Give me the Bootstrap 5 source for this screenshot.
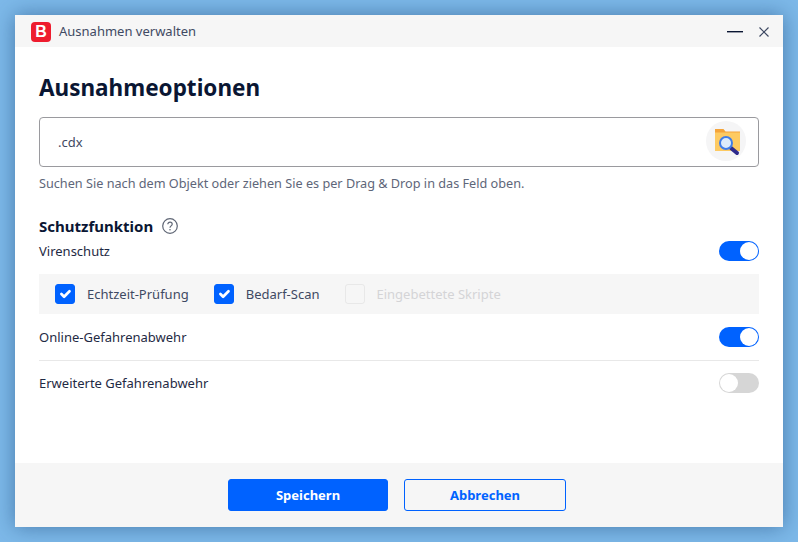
<!DOCTYPE html>
<html lang="de">
<head>
<meta charset="utf-8">
<title>Ausnahmen verwalten</title>
<link href="https://cdn.jsdelivr.net/npm/bootstrap@5.3.0/dist/css/bootstrap.min.css" rel="stylesheet">
<style>
html,body{height:100%;}
body{background:#7db9e9;padding:15px;font-family:"Noto Sans","Open Sans",sans-serif;font-size:13px;color:#0a1633;overflow:hidden;}
.win{height:512px;width:768px;background:#fff;box-shadow:0 0 20px rgba(20,60,110,.5);}
.tbar{height:32px;background:#f6f6f6;padding:1px 14px 0 16px;color:#3f4a63;}
.logo{width:20px;height:20px;background:#ee1c2e;border-radius:4px;color:#fff;font:700 16px/20px "Liberation Sans",sans-serif;text-align:center;margin-right:8px;}
.tbtn{display:block;}
.content{padding:0 24px;}
.title{font-size:22.5px;font-weight:700;line-height:32px;margin:25px 0 13px;color:#0a1633;font-family:"Noto Sans",sans-serif;}
.drop{height:50px;border:1px solid #9a9a9e;border-radius:4px;padding:0 8px 0 18px;color:#3f4a63;}
.drop span{padding-top:1px;}
.hint{font-size:12.68px;color:#5e6679;margin-top:7px;line-height:18px;}
.sect{font-size:15px;font-weight:700;line-height:20px;margin-top:24px;}
.helpic{margin-left:9px;}
.rowline{height:30px;color:#1f2a44;}
.rowline span,.subbox label{padding-top:1px;}
.rowline .form-check-input{margin:0;float:none;}
.form-switch .tog{width:40px;height:20px;margin:0;border:0;background-color:#d6d6d6;--bs-form-switch-bg:none;background-image:none;position:relative;box-shadow:none;}
.tog::after{content:"";position:absolute;top:1px;left:1px;width:18px;height:18px;border-radius:50%;background:#fff;}
.tog:checked{background-color:#0062ff;}
.tog:checked::after{left:21px;}
.subbox{background:#f6f6f6;height:40px;padding:0 16px;margin:8px 0;color:#3f4a63;}
.subbox .form-check-input{width:20px;height:20px;margin:0 12px 0 0;border-radius:3px;border:1px solid #d9d9d9;background-color:transparent;box-shadow:none;}
.subbox .form-check-input:checked{background-color:#0062ff;border-color:#0062ff;opacity:1;}
.opt{margin-right:25px;}
.off{color:#d4d4d6;}
.sepa{border-top:1px solid #e8e8e8;margin:8px 0 7px;}
.foot{height:64px;background:#f6f6f6;padding-right:4px;}
.fbtn{width:160px;height:32px;font-size:13px;font-weight:700;border-radius:3px;padding:0;line-height:1;}
.fbtn.btn-primary{background:#0062ff;border-color:#0062ff;}
.fbtn.btn-outline-primary{width:162px;color:#0062ff;border-color:#0062ff;background:transparent;}
</style>
</head>
<body>
<div class="win d-flex flex-column">
  <div class="tbar d-flex align-items-center">
    <div class="logo">B</div>
    <div class="flex-grow-1">Ausnahmen verwalten</div>
    <svg class="tbtn" width="16" height="2" viewBox="0 0 16 2" style="margin-right:16px"><rect width="16" height="1.4" fill="#0a1633"/></svg>
    <svg class="tbtn" width="10" height="10" viewBox="0 0 10 10"><path d="M.5.5l9 9M9.5.5l-9 9" stroke="#3f4a63" stroke-width="1.2" fill="none"/></svg>
  </div>
  <div class="content flex-grow-1">
    <h1 class="title">Ausnahmeoptionen</h1>
    <div class="drop d-flex align-items-center justify-content-between">
      <span>.cdx</span>
      <svg width="44" height="44" viewBox="0 0 44 44">
        <circle cx="20" cy="21" r="20" fill="#f5f5f6"/>
        <path d="M9 9h8.500l2 2.500H34V31H9z" fill="#f4a43a"/>
        <rect x="9" y="12.500" width="25" height="18.500" fill="#fdca62"/>
        <path d="M25 28l6 5" stroke="#2e2a8c" stroke-width="4" stroke-linecap="round"/>
        <circle cx="20" cy="23" r="6" fill="#dcebfb" stroke="#3f7ce8" stroke-width="2"/>
      </svg>
    </div>
    <div class="hint">Suchen Sie nach dem Objekt oder ziehen Sie es per Drag &amp; Drop in das Feld oben.</div>
    <div class="sect d-flex align-items-center">Schutzfunktion
      <svg class="helpic" width="16" height="16" viewBox="0 0 16 16"><circle cx="8" cy="8" r="7.300" fill="none" stroke="#5f6675" stroke-width="1.200"/><path d="M5.800 6.300c0-1.300 1-2.100 2.200-2.100s2.200.8 2.200 2c0 1.700-2.200 1.700-2.200 3.500" fill="none" stroke="#5f6675" stroke-width="1.200"/><circle cx="8" cy="11.700" r=".8" fill="#5f6675"/></svg>
    </div>
    <div class="rowline d-flex align-items-center justify-content-between form-switch p-0">
      <span>Virenschutz</span>
      <input class="form-check-input tog" type="checkbox" checked aria-label="Virenschutz">
    </div>
    <div class="subbox d-flex align-items-center">
      <div class="opt d-flex align-items-center"><input class="form-check-input" type="checkbox" checked id="c1"><label for="c1">Echtzeit-Prüfung</label></div>
      <div class="opt d-flex align-items-center"><input class="form-check-input" type="checkbox" checked id="c2"><label for="c2">Bedarf-Scan</label></div>
      <div class="opt d-flex align-items-center off"><input class="form-check-input" type="checkbox" id="c3" disabled><label for="c3">Eingebettete Skripte</label></div>
    </div>
    <div class="rowline d-flex align-items-center justify-content-between form-switch p-0">
      <span>Online-Gefahrenabwehr</span>
      <input class="form-check-input tog" type="checkbox" checked aria-label="Online-Gefahrenabwehr">
    </div>
    <div class="sepa"></div>
    <div class="rowline d-flex align-items-center justify-content-between form-switch p-0">
      <span>Erweiterte Gefahrenabwehr</span>
      <input class="form-check-input tog" type="checkbox" aria-label="Erweiterte Gefahrenabwehr">
    </div>
  </div>
  <div class="foot d-flex align-items-center justify-content-center gap-3">
    <button class="btn btn-primary fbtn" type="button">Speichern</button>
    <button class="btn btn-outline-primary fbtn" type="button">Abbrechen</button>
  </div>
</div>
</body>
</html>
